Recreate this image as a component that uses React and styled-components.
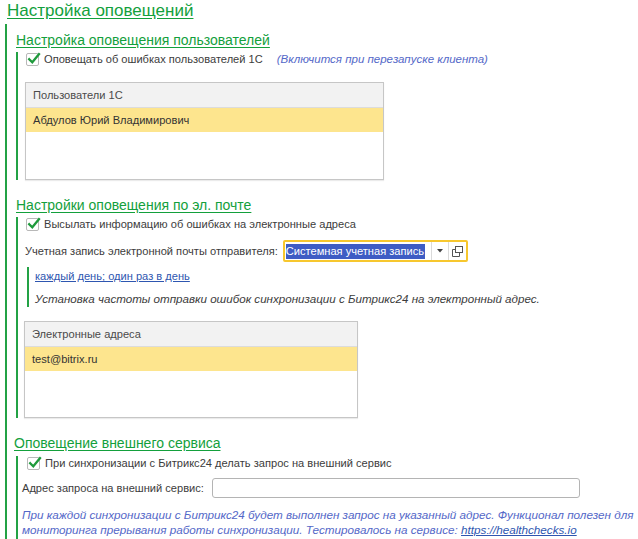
import React from 'react';
import styled, { createGlobalStyle } from 'styled-components';

const GlobalStyle = createGlobalStyle`
  body {
    margin: 0;
    background: #fff;
    font-family: "Liberation Sans", Arial, sans-serif;
    font-size: 11.1px;
    color: #3c3c3c;
  }
`;

const Page = styled.div`
  width: 638px;
  height: 539px;
  overflow: hidden;
  padding-left: 5px;
  box-sizing: border-box;
`;

const Title = styled.div`
  margin-left: 2px;
  font-size: 17px;
  line-height: 22px;
  height: 22px;
  color: #13a03c;
  text-decoration: underline;
  text-underline-offset: 2px;
`;

const Group = styled.div`
  margin-top: ${p => p.$top || 0}px;
  border-left: 2px solid #23a245;
  padding-left: ${p => p.$pad || 8}px;
  padding-bottom: ${p => p.$bottom || 0}px;
`;

const Section = styled.div`
  padding-top: ${p => p.$top || 0}px;
`;

const Heading = styled.div`
  font-size: 14px;
  line-height: 18px;
  height: 18px;
  color: #13a03c;
  text-decoration: underline;
  text-underline-offset: 2px;
  margin-left: ${p => p.$shift || 0}px;
`;

const CheckRow = styled.label`
  display: flex;
  align-items: center;
  gap: 5px;
  height: 14px;
  white-space: nowrap;
`;

const Box = styled.span`
  width: 13px;
  height: 13px;
  box-sizing: border-box;
  border: 1px solid #b8b8b8;
  border-radius: 2px;
  background: #fff;
  flex-shrink: 0;
  position: relative;
`;

const Hint = styled.span`
  font-style: italic;
  font-size: 11.5px;
  color: #5468c8;
  margin-left: 9px;
`;

const FieldRow = styled.div`
  display: flex;
  align-items: center;
  gap: ${p => p.$gap || 5}px;
  white-space: nowrap;
  margin-top: ${p => p.$top || 0}px;
  margin-left: ${p => p.$shift || 0}px;
`;

const Select = styled.div`
  width: 185px;
  height: 22px;
  box-sizing: border-box;
  border: 2px solid #f7c72e;
  border-radius: 2px;
  display: flex;
  align-items: center;
`;

const SelValue = styled.div`
  flex: 1;
  padding-left: 1px;
  overflow: hidden;
`;

const Selected = styled.span`
  background: #3e5cc4;
  color: #fff;
  line-height: 15px;
  display: inline-block;
  padding-right: 1px;
`;

const SelBtn = styled.span`
  width: ${p => p.$w}px;
  height: 18px;
  border-left: 1px solid #dadada;
  display: flex;
  align-items: center;
  justify-content: center;
  box-sizing: border-box;
`;

const Input = styled.div`
  width: 368px;
  height: 20px;
  box-sizing: border-box;
  border: 1px solid #b4b4b4;
  border-radius: 3px;
  background: #fff;
`;

const Nested = styled.div`
  margin-top: 5px;
  margin-left: 1px;
  border-left: 2px solid #23a245;
  padding: 2px 0 1px 6px;
`;

const Link = styled.a`
  color: #2e56b0;
  text-decoration: underline;
  display: block;
  line-height: 15px;
`;

const Note = styled.div`
  font-style: italic;
  font-size: 11.6px;
  color: #3c3c3c;
  margin-top: 7px;
  line-height: 15px;
  white-space: nowrap;
`;

const Table = styled.div`
  width: ${p => p.$w}px;
  height: ${p => p.$h}px;
  box-sizing: border-box;
  border: 1px solid #c6c6c6;
  margin-top: ${p => p.$top || 0}px;
  margin-left: ${p => p.$shift || 0}px;
  box-shadow: 0 1px 1px rgba(0,0,0,0.08);
`;

const HeadCell = styled.div`
  height: 24px;
  line-height: 24px;
  background: #f2f2f2;
  border-bottom: 1px solid #dcdcdc;
  padding-left: 7px;
  color: #4a4a4a;
`;

const RowCell = styled.div`
  height: 24px;
  line-height: 24px;
  background: #fde58e;
  padding-left: 7px;
  color: #333;
`;

const Info = styled.div`
  font-style: italic;
  font-size: 11.7px;
  color: #5468c8;
  line-height: 15px;
  margin-top: 9px;
  margin-left: -5px;
  white-space: nowrap;
  a {
    color: #2e56b0;
    text-decoration: underline;
  }
`;

const Check = () => (
  <Box>
    <svg width="14" height="13" viewBox="0 0 14 13" style={{ position: 'absolute', left: 0, top: -2 }}>
      <path d="M2.2 7.2 L5.3 10.3 L12 2.2" fill="none" stroke="#1f9a3c" strokeWidth="2.3" strokeLinecap="square" />
    </svg>
  </Box>
);

export default function App() {
  return (
    <Page>
      <GlobalStyle />
      <Title>Настройка оповещений</Title>
      <Group $top={2} $pad={9}>
        <Section $top={7}>
          <Heading>Настройка оповещения пользователей</Heading>
          <Group $top={3}>
            <CheckRow>
              <Check />
              Оповещать об ошибках пользователей 1С
              <Hint>(Включится при перезапуске клиента)</Hint>
            </CheckRow>
            <Table $w={359} $h={98} $top={16} $shift={-1}>
              <HeadCell>Пользователи 1С</HeadCell>
              <RowCell>Абдулов Юрий Владимирович</RowCell>
            </Table>
          </Group>
        </Section>
        <Section $top={16}>
          <Heading>Настройки оповещения по эл. почте</Heading>
          <Group $top={3}>
            <CheckRow>
              <Check />
              Высылать информацию об ошибках на электронные адреса
            </CheckRow>
            <FieldRow $top={9} $shift={-1}>
              Учетная запись электронной почты отправителя:
              <Select>
                <SelValue>
                  <Selected>Системная учетная запись</Selected>
                </SelValue>
                <SelBtn $w={17}>
                  <svg width="6" height="4" viewBox="0 0 6 4"><path d="M0 0 H6 L3 3.5 Z" fill="#444" /></svg>
                </SelBtn>
                <SelBtn $w={18}>
                  <svg width="11" height="11" viewBox="0 0 11 11" fill="none" stroke="#555" strokeWidth="1">
                    <rect x="3.5" y="0.5" width="7" height="6" />
                    <path d="M3.5 3.5 H0.5 V10.5 H7.5 V6.5" />
                  </svg>
                </SelBtn>
              </Select>
            </FieldRow>
            <Nested>
              <Link href="#">каждый день; один раз в день</Link>
              <Note>Установка частоты отправки ошибок синхронизации с Битрикс24 на электронный адрес.</Note>
            </Nested>
            <Table $w={334} $h={97} $top={14} $shift={-2}>
              <HeadCell>Электронные адреса</HeadCell>
              <RowCell>test@bitrix.ru</RowCell>
            </Table>
          </Group>
        </Section>
        <Section $top={16}>
          <Heading $shift={-2}>Оповещение внешнего сервиса</Heading>
          <Group $top={4} $pad={9} $bottom={10}>
            <CheckRow>
              <Check />
              При синхронизации с Битрикс24 делать запрос на внешний сервис
            </CheckRow>
            <FieldRow $top={8} $shift={-5} $gap={8}>
              Адрес запроса на внешний сервис:
              <Input />
            </FieldRow>
            <Info>
              При каждой синхронизации с Битрикс24 будет выполнен запрос на указанный адрес. Функционал полезен для
              <br />
              мониторинга прерывания работы синхронизации. Тестировалось на сервисе: <a href="#">https://healthchecks.io</a>
            </Info>
          </Group>
        </Section>
      </Group>
    </Page>
  );
}
